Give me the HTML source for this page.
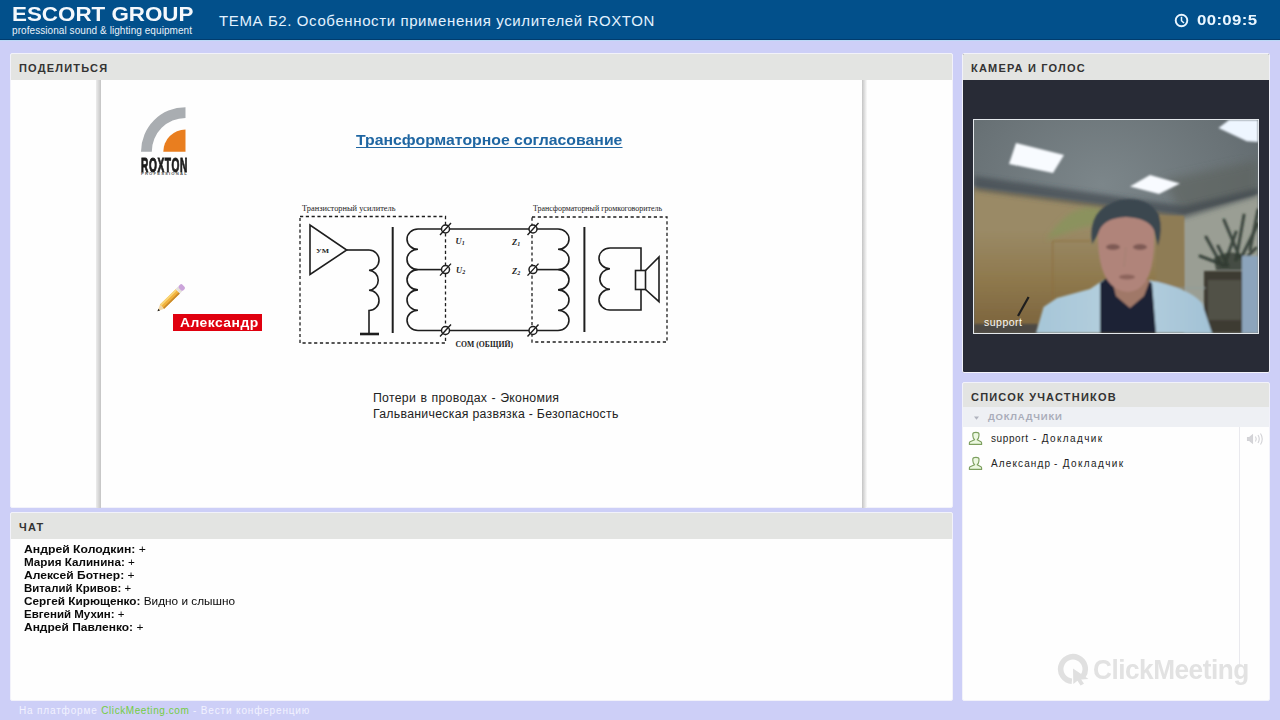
<!DOCTYPE html>
<html><head><meta charset="utf-8">
<style>
*{margin:0;padding:0;box-sizing:border-box}
html,body{width:1280px;height:720px;overflow:hidden}
body{background:#CDCFF7;font-family:"Liberation Sans",sans-serif;position:relative}
.a{position:absolute;white-space:nowrap;line-height:1}
#hdr{position:absolute;left:0;top:0;width:1280px;height:40px;background:#02508B;border-bottom:1px solid #013C6E}
#hdrl{position:absolute;left:0;top:40px;width:1280px;height:1px;background:#BBD8F6}
.panel{position:absolute;background:#FEFEFE;border:1px solid #F2F2FA;border-radius:2px;overflow:hidden}
.ph{position:absolute;left:0;top:0;right:0;height:26px;background:#E3E4E2}
.cl{left:24px;font-size:10px;color:#0A0A0A;transform-origin:0 0}
.pt{position:absolute;left:8px;top:9px;font-size:11px;font-weight:bold;color:#333;letter-spacing:1.2px;line-height:1}
</style></head><body>
<div id="hdr"></div><div id="hdrl"></div>
<div class="a" id="logo1" style="left:12px;top:5px;font-size:19.5px;font-weight:bold;color:#F4F8FC;transform:scaleX(1.147);transform-origin:0 0">ESCORT GROUP</div>
<div class="a" id="logo2" style="left:12px;top:25.5px;font-size:10px;color:#E8F0F8;letter-spacing:0.07px">professional sound &amp; lighting equipment</div>
<div class="a" id="title" style="left:219px;top:12.5px;font-size:15px;color:#E2F2FF;letter-spacing:0.61px">ТЕМА Б2. Особенности применения усилителей ROXTON</div>
<svg style="position:absolute;left:1172px;top:11px" width="19" height="19" viewBox="0 0 19 19"><circle cx="9.5" cy="9.5" r="5.8" fill="none" stroke="#EAF6FF" stroke-width="1.9"/><path d="M9.5,5.8 L9.5,9.7 L12,12" fill="none" stroke="#EAF6FF" stroke-width="1.5"/></svg>
<div class="a" id="timer" style="left:1196.5px;top:13px;font-size:14px;font-weight:bold;color:#EAF6FF;letter-spacing:0.3px;transform:scaleX(1.2);transform-origin:0 0">00:09:5</div>

<!-- share panel -->
<div class="panel" style="left:10px;top:53px;width:943px;height:455px;">
  <div class="ph"></div>
  <div class="pt">ПОДЕЛИТЬСЯ</div>
</div>

<!-- slide shadows -->
<div style="position:absolute;left:96px;top:80px;width:5px;height:428px;background:linear-gradient(to right,#ECECEC,#C4C4C4)"></div>
<div style="position:absolute;left:862px;top:80px;width:5px;height:428px;background:linear-gradient(to right,#C4C4C4,#FAFAFA)"></div>
<svg style="position:absolute;left:0;top:0" width="1280" height="720" viewBox="0 0 1280 720">
 <!-- ROXTON logo -->
 <path d="M141,151.7 A44.5,44.5 0 0 1 185.5,107.2 L185.5,118 A33.7,33.7 0 0 0 151.8,151.7 Z" fill="#A9ADB1"/>
 <path d="M163.3,151.7 A22.2,22.2 0 0 1 185.5,129.5 L185.5,151.7 Z" fill="#E97E1F"/>
 <g fill="none" stroke="#1E1E1E" stroke-width="1.6">
  <rect x="300" y="216.5" width="145.5" height="126.5" stroke-dasharray="3.2,2.6" stroke-width="1.3"/>
  <rect x="532" y="217" width="135" height="125" stroke-dasharray="3.2,2.6" stroke-width="1.3"/>
  <path d="M310,225 L310,274.5 L346.7,250 Z"/>
  <path d="M346.7,250 L369,250"/>
  <path d="M369.0,250.0 A10.0,10.08 0 0 1 369.0,270.2 A10.0,10.08 0 0 1 369.0,290.3 A10.0,10.08 0 0 1 369.0,310.5 L369,334"/>
  <path d="M360,334 L379,334" stroke-width="2.6"/>
  <path d="M392.7,227 L392.7,333" stroke-width="2"/>
  <path d="M584.4,227 L584.4,332" stroke-width="2"/>
  <path d="M533,229 L418,229 A11.0,10.15 0 0 0 418.0,249.3 A11.0,10.15 0 0 0 418.0,269.6 A11.0,10.15 0 0 0 418.0,289.9 A11.0,10.15 0 0 0 418.0,310.2 A11.0,10.15 0 0 0 418.0,330.5 L533,330.5"/>
  <path d="M418,269.6 L445.5,269.6"/>
  <path d="M533,229 L558,229 A11.0,10.15 0 0 1 558.0,249.3 A11.0,10.15 0 0 1 558.0,269.6 A11.0,10.15 0 0 1 558.0,289.9 A11.0,10.15 0 0 1 558.0,310.2 A11.0,10.15 0 0 1 558.0,330.5 L533,330.5"/>
  <path d="M533,269.6 L558,269.6"/>
  <path d="M641,270.5 L641,248 L610,248 A11.0,10.33 0 0 0 610.0,268.7 A11.0,10.33 0 0 0 610.0,289.3 A11.0,10.33 0 0 0 610.0,310.0 L641,310 L641,289.5"/>
  <rect x="635.5" y="270.5" width="10" height="19"/>
  <path d="M645.5,270.5 L659,257 L659,301.7 L645.5,289.5"/>
 </g>
 <g fill="#fff" stroke="#1E1E1E" stroke-width="1.5">
  <circle cx="445.5" cy="229" r="4"/><circle cx="445.5" cy="269.6" r="4"/><circle cx="445.5" cy="330.5" r="4"/>
  <circle cx="533" cy="229" r="4"/><circle cx="533" cy="269.6" r="4"/><circle cx="533" cy="330.5" r="4"/>
 </g>
 <g stroke="#1E1E1E" stroke-width="1.4">
  <path d="M440,235 L451,223 M440,275.6 L451,263.6 M440,336.5 L451,324.5 M527.5,235 L538.5,223 M527.5,275.6 L538.5,263.6 M527.5,336.5 L538.5,324.5"/>
 </g>
 <g font-family="Liberation Serif" fill="#222">
  <text x="302" y="210.5" font-size="7.5" textLength="93.5" lengthAdjust="spacingAndGlyphs">Транзисторный усилитель</text>
  <text x="533" y="211" font-size="7.5" textLength="129" lengthAdjust="spacingAndGlyphs">Трансформаторный громкоговоритель</text>
  <text x="316" y="253" font-size="7" font-weight="bold" textLength="13" lengthAdjust="spacingAndGlyphs">УМ</text>
  <text x="455.5" y="244" font-size="8.5" font-style="italic" font-weight="bold">U<tspan font-size="6" dy="1">1</tspan></text>
  <text x="456" y="273" font-size="8.5" font-style="italic" font-weight="bold">U<tspan font-size="6" dy="1">2</tspan></text>
  <text x="512" y="245" font-size="8.5" font-style="italic" font-weight="bold">Z<tspan font-size="6" dy="1">1</tspan></text>
  <text x="512" y="274" font-size="8.5" font-style="italic" font-weight="bold">Z<tspan font-size="6" dy="1">2</tspan></text>
  <text x="455.5" y="347" font-size="8" font-weight="bold" textLength="57.5" lengthAdjust="spacingAndGlyphs">COM (ОБЩИЙ)</text>
 </g>
 <!-- pencil -->
 <g transform="translate(157.5,311.3) rotate(-44.6)">
  <path d="M0,0 L6.5,-3 L6.5,3 Z" fill="#F3D9A8"/>
  <path d="M0,0 L2.4,-1.1 L2.4,1.1 Z" fill="#1A1A1A"/>
  <rect x="6.5" y="-3" width="22" height="6" fill="#F2B23C"/>
  <rect x="6.5" y="-3" width="22" height="1.8" fill="#F9D77A"/>
  <rect x="6.5" y="1.3" width="22" height="1.7" fill="#C98A2A"/>
  <rect x="28.5" y="-3.1" width="3.2" height="6.2" fill="#E4E0DC"/>
  <rect x="31.5" y="-3.2" width="5" height="6.4" rx="1.8" fill="#CBA4DA"/>
 </g>
</svg>
<div class="a" style="left:140.5px;top:155.5px;font-size:19.5px;font-weight:bold;color:#1C1C1C;transform:scaleX(0.52);transform-origin:0 0;letter-spacing:1.2px;-webkit-text-stroke:1px #1C1C1C">ROXTON</div>
<div class="a" style="left:141px;top:172.2px;font-size:4.2px;color:#555;letter-spacing:1.15px;font-weight:bold">PROFESSIONAL</div>
<div class="a" id="stitle" style="left:356px;top:132px;font-size:15.2px;font-weight:bold;color:#1F66A2;letter-spacing:0;border-bottom:1.5px solid #1F66A2;padding-bottom:0;transform:scaleX(1.041);transform-origin:0 0">Трансформаторное согласование</div>
<div class="a" id="sl1" style="left:373px;top:392px;font-size:12.3px;color:#222;letter-spacing:0.28px;word-spacing:0.6px">Потери в проводах - Экономия</div>
<div class="a" id="sl2" style="left:373px;top:408px;font-size:12.3px;color:#222;letter-spacing:0.28px">Гальваническая развязка - Безопасность</div>
<div style="position:absolute;left:173px;top:314px;width:89px;height:17px;background:#E0000F"></div>
<div class="a" id="tag" style="left:180px;top:316.5px;font-size:12px;font-weight:bold;color:#fff;letter-spacing:0.4px;transform:scaleX(1.157);transform-origin:0 0">Александр</div>

<!-- chat panel -->
<div class="panel" style="left:10px;top:512px;width:943px;height:189px;">
  <div class="ph"></div>
  <div class="pt">ЧАТ</div>
</div>
<!-- camera panel -->
<div class="panel" style="left:962px;top:53px;width:308px;height:320px;background:#282B36">
  <div class="ph"></div>
  <div class="pt">КАМЕРА И ГОЛОС</div>
</div>
<!-- participants -->
<div class="panel" style="left:962px;top:382px;width:308px;height:319px;">
  <div class="ph"></div>
  <div class="pt">СПИСОК УЧАСТНИКОВ</div>
</div>

<div id="chat">
<div class="a cl" style="top:545px;transform:scaleX(1.221)"><b>Андрей Колодкин:</b> +</div>
<div class="a cl" style="top:558px;transform:scaleX(1.168)"><b>Мария Калинина:</b> +</div>
<div class="a cl" style="top:571px;transform:scaleX(1.208)"><b>Алексей Ботнер:</b> +</div>
<div class="a cl" style="top:584px;transform:scaleX(1.142)"><b>Виталий Кривов:</b> +</div>
<div class="a cl" style="top:597px;transform:scaleX(1.179)"><b>Сергей Кирющенко:</b> Видно и слышно</div>
<div class="a cl" style="top:610px;transform:scaleX(1.151)"><b>Евгений Мухин:</b> +</div>
<div class="a cl" style="top:623px;transform:scaleX(1.197)"><b>Андрей Павленко:</b> +</div>
</div>
</div>
</div>

<div style="position:absolute;left:973px;top:119px;width:286px;height:215px;border:1px solid #E4E8EC;overflow:hidden;background:#9AA0A0">
<svg width="284" height="213" viewBox="0 0 284 213" style="position:absolute;left:0;top:0">
 <defs>
  <radialGradient id="ceil" cx="0.45" cy="0.3" r="0.8"><stop offset="0" stop-color="#7C868A"/><stop offset="0.6" stop-color="#697276"/><stop offset="1" stop-color="#586166"/></radialGradient>
  <linearGradient id="wood" x1="0" y1="0" x2="0" y2="1"><stop offset="0.3" stop-color="#9A8A66"/><stop offset="0.65" stop-color="#8E784C"/><stop offset="1" stop-color="#7A623C"/></linearGradient>
  <linearGradient id="jk" x1="0" y1="0" x2="1" y2="0"><stop offset="0" stop-color="#A6C6D8"/><stop offset="0.5" stop-color="#B6D0DE"/><stop offset="1" stop-color="#A2C2D6"/></linearGradient>
  <filter id="bl"><feGaussianBlur stdDeviation="1.2"/></filter>
  <filter id="bl2"><feGaussianBlur stdDeviation="2.5"/></filter>
  <filter id="bl3"><feGaussianBlur stdDeviation="5"/></filter>
 </defs>
 <rect x="0" y="0" width="284" height="213" fill="url(#ceil)"/>
 <g filter="url(#bl3)"><path d="M190,60 L284,40 L284,90 L210,100 Z" fill="#5A605C" opacity="0.6"/></g>
 <g filter="url(#bl)">
 <path d="M0,66 L210,94 L284,74 L284,213 L0,213 Z" fill="#9A9E94"/>
 <path d="M0,67 L210,95 L210,213 L0,213 Z" fill="url(#wood)"/>
 </g>
 <g filter="url(#bl2)"><path d="M0,56 L210,86 L284,68 L284,76 L210,98 L0,70 Z" fill="#3E464C" opacity="0.65"/></g>
 <g filter="url(#bl)">
 <path d="M42,23 L90,35 L79,53 L35,44 Z" fill="#F8FBFF"/>
 <path d="M176,55 L206,63.5 L185,74 L156,66.5 Z" fill="#F8FBFF"/>
 <path d="M244.5,8 L255,0 L284,0 L284,22 L272.8,21.3 Z" fill="#EEF6FF"/>
 <path d="M78.6,121 L78.6,213 M78.6,121 L116,121" stroke="#8E7040" stroke-width="1"/>
 <path d="M0,204 L64,204 L64,213 L0,213 Z" fill="#3C4048" opacity="0.75"/>
 </g>
 <g filter="url(#bl2)">
 <path d="M72,120 Q90,92 110,88 Q125,86 130,92 L128,104 Q110,106 95,112 Z" fill="#7C9A58" opacity="0.5"/>
 </g>
 <g filter="url(#bl)">
 <rect x="182" y="96" width="28" height="117" fill="#8E7C54"/>
 <g stroke="#2C3630" stroke-width="3" stroke-linecap="round" fill="none" opacity="0.85"><path d="M248,146 L232,117"/><path d="M250,146 L262,112"/><path d="M252,146 L226,136"/><path d="M254,146 L244,126"/><path d="M262,140 L270,95"/><path d="M266,138 L250,100"/><path d="M268,136 L284,104"/><path d="M270,140 L282,128"/><path d="M276,130 L284,90"/></g><path d="M240,138 Q256,128 272,136 L270,150 L242,150 Z" fill="#2E3A30" opacity="0.8"/>
 <rect x="230" y="151" width="41" height="62" fill="#3E3A30"/>
 <rect x="234" y="160" width="33" height="40" fill="#56584E" opacity="0.8"/>
 <path d="M162,168 L232,168" stroke="#8E9A9C" stroke-width="1.5" opacity="0.6"/>
 <rect x="268" y="136" width="16" height="77" fill="#8CA4BC"/>
 <path d="M62,213 L69.6,187 L83,178 L116,169 L129.6,160 L150,160 L175,160 Q215,168 228,183 L238,213 Z" fill="url(#jk)"/>
 <path d="M126,163 L133,158 L170,158 L178,163 L182,213 L126,213 Z" fill="#1C2436"/>
 <path d="M138,160 L176,160 L170,176 L156,188 L142,176 Z" fill="#A07868"/>
 <path d="M124,112 Q123,170 154,172 Q182,170 180,112 Q180,95 152,93 Q125,95 124,112 Z" fill="#B0847A"/>
 <path d="M118,124 Q113,88 146,80 Q174,76 185,95 Q189,110 184,126 L180,110 Q174,98 152,97 Q128,98 124,114 Z" fill="#3A4650"/>
 <ellipse cx="139" cy="127" rx="7" ry="3" fill="#7E5A54"/>
 <ellipse cx="166" cy="127" rx="7" ry="3" fill="#7E5A54"/>
 <path d="M152,127 L150,147" stroke="#A88276" stroke-width="2"/>
 <ellipse cx="153" cy="157" rx="8" ry="2.6" fill="#8C645C"/>
 </g>
 <path d="M54.6,177 L44,196" stroke="#1E1E1E" stroke-width="2.2"/>
</svg>
<div class="a" id="vlabel" style="left:10px;top:197px;font-size:10.5px;color:#F8F8F8;letter-spacing:0.5px">support</div>
</div>
<div style="position:absolute;left:963px;top:407px;width:306px;height:20px;background:#EEF0F4"></div>
<svg style="position:absolute;left:974px;top:416px" width="5" height="4" viewBox="0 0 5 4"><path d="M0,0.5 L5,0.5 L2.5,3.8 Z" fill="#B0B3BE"/></svg>
<div class="a" id="dokl" style="left:988px;top:412px;font-size:9.5px;font-weight:bold;color:#A9ACB9;letter-spacing:0.8px">ДОКЛАДЧИКИ</div>
<div style="position:absolute;left:1239px;top:427px;width:1px;height:237px;background:#E9E9EE"></div>
<svg style="position:absolute;left:968px;top:431px" width="15" height="15" viewBox="0 0 15 15"><path d="M6.6,8.8 L5.4,7.2 Q4.7,5.5 4.8,3 Q4.9,1.4 7.9,1.4 Q10.9,1.4 11,3 Q11.1,5.5 10.4,7.2 L9.2,8.8 L12.9,10.7 Q13.6,11.2 13.6,12 L13.6,13.4 L1.4,13.4 L1.4,12 Q1.4,11.2 2.1,10.7 Z" fill="#ECF8E0" stroke="#7C9F5E" stroke-width="1.15" stroke-linejoin="round"/></svg>
<svg style="position:absolute;left:968px;top:456px" width="15" height="15" viewBox="0 0 15 15"><path d="M6.6,8.8 L5.4,7.2 Q4.7,5.5 4.8,3 Q4.9,1.4 7.9,1.4 Q10.9,1.4 11,3 Q11.1,5.5 10.4,7.2 L9.2,8.8 L12.9,10.7 Q13.6,11.2 13.6,12 L13.6,13.4 L1.4,13.4 L1.4,12 Q1.4,11.2 2.1,10.7 Z" fill="#ECF8E0" stroke="#7C9F5E" stroke-width="1.15" stroke-linejoin="round"/></svg>
<div class="a" id="p1" style="left:991px;top:433.5px;font-size:10px;color:#222;letter-spacing:0.6px">support</div>
<div class="a" id="p1b" style="left:1033px;top:433.5px;font-size:10px;color:#222;letter-spacing:1.36px">- Докладчик</div>
<div class="a" id="p2" style="left:991px;top:458.5px;font-size:10px;color:#222;letter-spacing:1.12px">Александр</div>
<div class="a" id="p2b" style="left:1054px;top:458.5px;font-size:10px;color:#222;letter-spacing:1.36px">- Докладчик</div>
<svg style="position:absolute;left:1246px;top:432px" width="18" height="14" viewBox="0 0 18 14"><g fill="none" stroke="#D2D2D6" stroke-width="1.1"><path d="M1.5,5.5 L3.5,5.5 L6.5,3 L6.5,11 L3.5,8.5 L1.5,8.5 Z" fill="#D4D4D8"/><path d="M9.5,4.5 Q11,7 9.5,9.5"/><path d="M12,3 Q14.5,7 12,11"/><path d="M14.5,1.5 Q18,7 14.5,12.5"/></g></svg>
<svg style="position:absolute;left:1057px;top:653px" width="34" height="34" viewBox="0 0 34 34"><path d="M14.9,28.3 A12.3,12.3 0 1 1 26.1,23" fill="none" stroke="#E0E0E0" stroke-width="5.6"/><path d="M16,15.5 L16.3,31 L20.5,27.8 L23.5,32.5 L27,30.8 L24.2,26.4 L31.5,26 Z" fill="#E0E0E0"/></svg>
<div class="a" id="cmlogo" style="left:1093px;top:655.5px;font-size:27.5px;font-weight:bold;color:#E2E2E2;letter-spacing:-0.5px;transform:scaleX(0.952);transform-origin:0 0">ClickMeeting</div>
<div class="a" id="foot" style="left:19px;top:706px;font-size:10px;color:#F2F2FF;letter-spacing:0.84px">На платформе <span style="color:#74CC44;letter-spacing:0.58px">ClickMeeting.com</span> - Вести конференцию</div>
</body></html>
